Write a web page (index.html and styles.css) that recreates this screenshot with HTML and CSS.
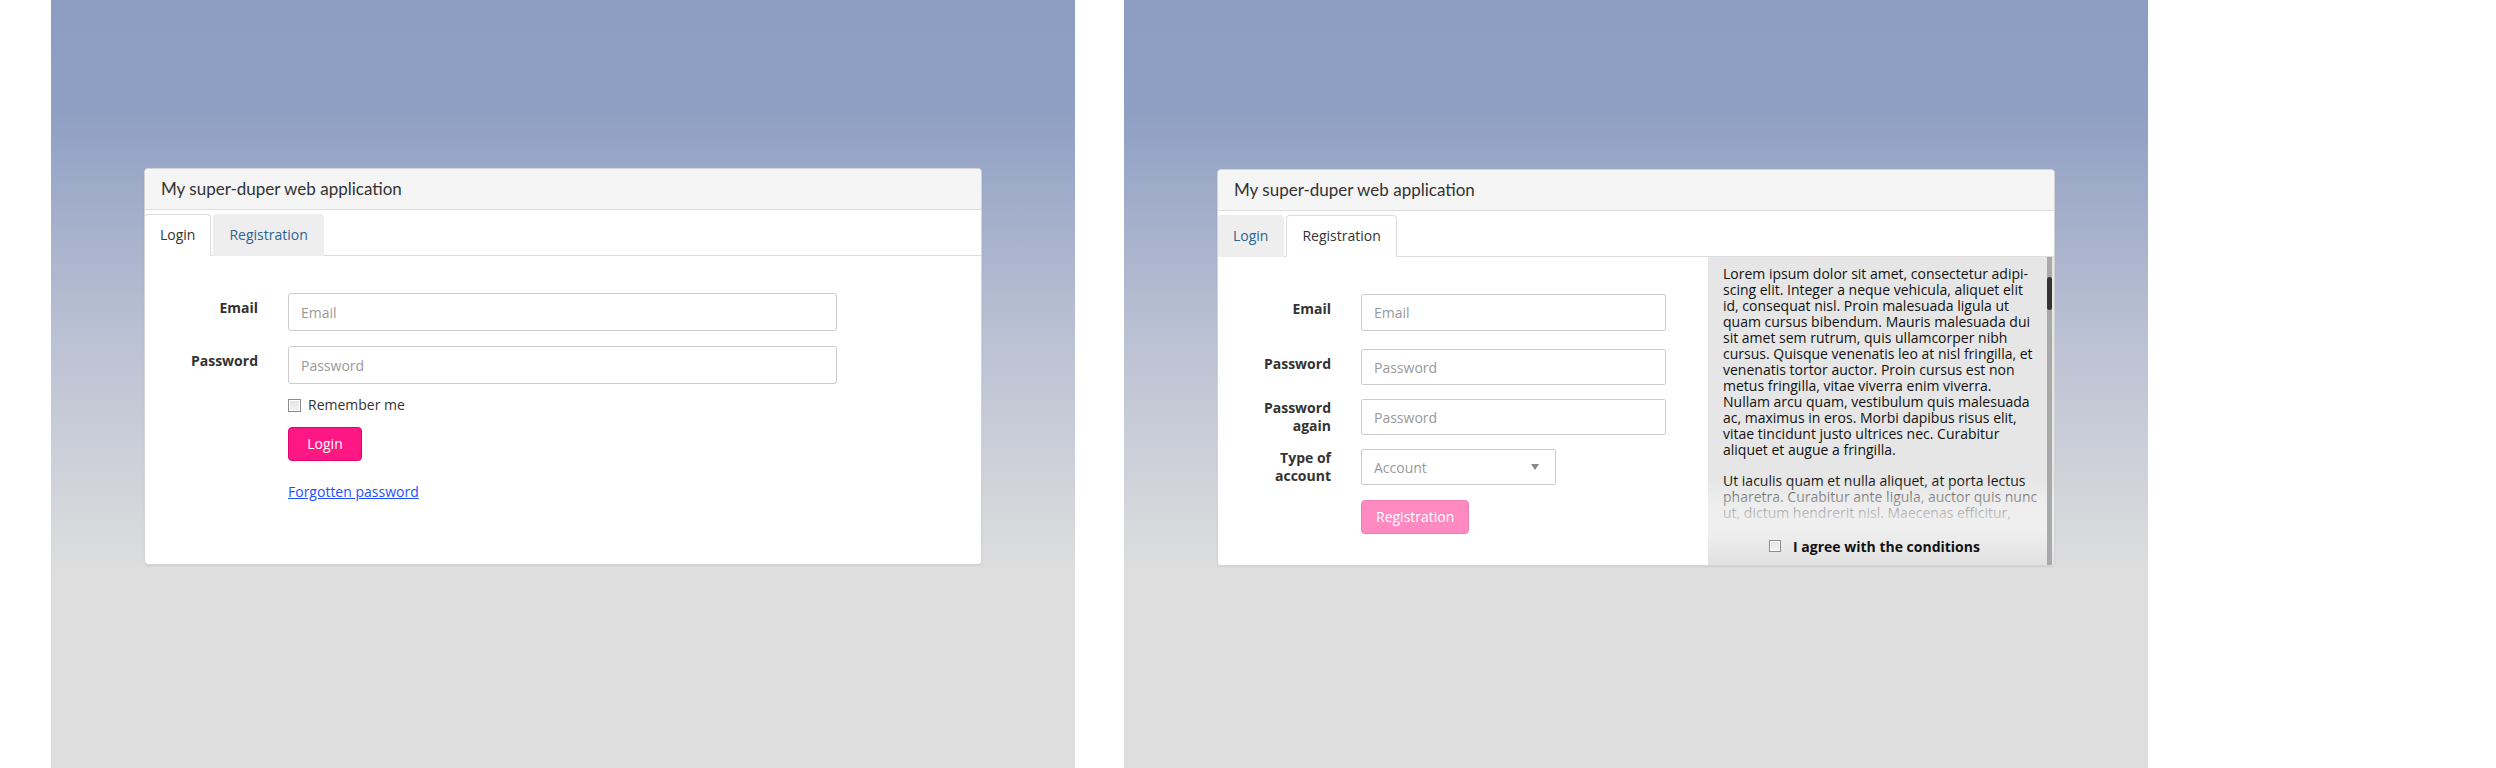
FILE: index.html
```html
<!DOCTYPE html>
<html lang="en">
<head>
<meta charset="utf-8">
<title>My super-duper web application</title>
<link rel="stylesheet" href="styles.css">
</head>
<body>
<div class="stage">
  <section class="screen">
    <div class="card">
      <div class="card-header">My super-duper web application</div>
      <ul class="tabs">
        <li class="tab is-active">Login</li>
        <li class="tab">Registration</li>
      </ul>
      <div class="tab-body">
        <form class="form form--login">
          <div class="row">
            <label class="label">Email</label>
            <input class="control control--wide" type="text" placeholder="Email">
          </div>
          <div class="row row--tight">
            <label class="label">Password</label>
            <input class="control control--wide" type="password" placeholder="Password">
          </div>
          <div class="row row--offset">
            <label class="check"><span class="checkbox"></span>Remember me</label>
          </div>
          <div class="row row--offset row--button">
            <button class="btn" type="button">Login</button>
          </div>
          <div class="row row--offset">
            <a class="link" href="#">Forgotten password</a>
          </div>
        </form>
      </div>
    </div>
  </section>

  <section class="screen screen--reg">
    <div class="card">
      <div class="card-header">My super-duper web application</div>
      <ul class="tabs">
        <li class="tab">Login</li>
        <li class="tab is-active">Registration</li>
      </ul>
      <div class="tab-body tab-body--split">
        <form class="form form--reg">
          <div class="row">
            <label class="label">Email</label>
            <input class="control control--mid" type="text" placeholder="Email">
          </div>
          <div class="row">
            <label class="label">Password</label>
            <input class="control control--mid" type="password" placeholder="Password">
          </div>
          <div class="row">
            <label class="label label--two">Password again</label>
            <input class="control control--mid" type="password" placeholder="Password">
          </div>
          <div class="row">
            <label class="label label--two">Type of account</label>
            <div class="control control--select">
              <span class="select-text">Account</span>
              <svg class="select-arrow" width="8" height="6" viewBox="0 0 8 6"><path d="M0 0H8L4 6Z" fill="#8a8a8a"/></svg>
            </div>
          </div>
          <div class="row row--offset">
            <button class="btn btn--disabled" type="button">Registration</button>
          </div>
        </form>
        <aside class="terms">
          <div class="terms-text">
            <p>Lorem ipsum dolor sit amet, consectetur adipi&shy;scing elit. Integer a neque vehicula, aliquet elit id, consequat nisl. Proin malesuada ligula ut quam cursus bibendum. Mauris malesuada dui sit amet sem rutrum, quis ullamcorper nibh cursus. Quisque venenatis leo at nisl fringilla, et venenatis tortor auctor. Proin cursus est non metus fringilla, vitae viverra enim viverra. Nullam arcu quam, vestibulum quis malesuada ac, maximus in eros. Morbi dapibus risus elit, vitae tincidunt justo ultrices nec. Curabitur aliquet et augue a fringilla.</p>
            <p>Ut iaculis quam et nulla aliquet, at porta lectus pharetra. Curabitur ante ligula, auctor quis nunc ut, dictum hendrerit nisl. Maecenas efficitur,</p>
          </div>
          <div class="terms-footer">
            <label class="agree"><span class="checkbox checkbox--small"></span>I agree with the conditions</label>
          </div>
          <div class="scrollbar"><div class="scrollbar-thumb"></div></div>
        </aside>
      </div>
    </div>
  </section>
</div>
</body>
</html>
```

FILE: styles.css
```css
html, body {
  margin: 0;
  padding: 0;
  background: #ffffff;
}

body {
  font-family: "Open Sans", "DejaVu Sans", sans-serif;
  color: #333333;
}

.stage {
  display: flex;
  gap: 49px;
  padding-left: 51px;
}

.screen {
  width: 1024px;
  height: 768px;
  flex: none;
  box-sizing: border-box;
  padding-top: 168px;
  background: linear-gradient(to bottom, #8e9ec3 0px, #8f9fc3 110px, #b9c0d3 330px, #dedede 575px, #dedede 768px);
}

.screen--reg {
  padding-top: 169px;
}

.card {
  width: 838px;
  margin: 0 auto;
  box-sizing: border-box;
  background: #ffffff;
  border: 1px solid #d4d4d4;
  border-radius: 4px;
  box-shadow: 0 1px 2px rgba(0, 0, 0, 0.06);
  overflow: hidden;
}

.card-header {
  background: #f5f5f5;
  border-bottom: 1px solid #dddddd;
  padding: 10px 16px;
  font-family: Lato, "Open Sans", sans-serif;
  font-size: 17px;
  line-height: 20px;
  color: #333333;
}

.tabs {
  list-style: none;
  margin: 4px 0 0 -1px;
  padding: 0;
  display: flex;
  border-bottom: 1px solid #dddddd;
}

.tab {
  padding: 10px 15px;
  margin: 0 2px -1px 0;
  font-size: 14px;
  line-height: 20px;
  color: #2a6496;
  background: #eeeeee;
  border: 1px solid #eeeeee;
  border-bottom-color: transparent;
  border-radius: 4px 4px 0 0;
}

.tab.is-active {
  color: #333333;
  background: #ffffff;
  border-color: #dddddd #dddddd transparent;
}

.tab-body {
  height: 308px;
  box-sizing: border-box;
}

.tab-body--split {
  display: flex;
}

.form {
  padding-top: 37px;
  box-sizing: border-box;
}

.form--reg {
  width: 490px;
  flex: none;
}

.row {
  display: flex;
  align-items: flex-start;
  margin-bottom: 15px;
}

.row--tight {
  margin-bottom: 14px;
}

.row--offset {
  padding-left: 143px;
}

.row--button {
  margin-bottom: 21px;
}

.label {
  width: 113px;
  flex: none;
  box-sizing: border-box;
  padding: 6px 0 0 15px;
  margin-right: 30px;
  text-align: right;
  font-weight: 700;
  font-size: 14px;
  line-height: 18px;
  color: #333333;
}

.label--two {
  padding-top: 0;
}

.control {
  box-sizing: border-box;
  height: 38px;
  padding: 0 12px;
  border: 1px solid #cccccc;
  border-radius: 3px;
  background: #ffffff;
  font-family: "Open Sans", sans-serif;
  font-size: 14px;
  color: #555555;
  outline: none;
}

.control::placeholder {
  color: #999999;
}

.control--wide {
  width: 549px;
}

.form--reg .row {
  margin-bottom: 14px;
}

.form--reg .row:first-child {
  margin-bottom: 18px;
}

.form--reg .row:nth-child(4) {
  margin-bottom: 15px;
}

.form--reg .control {
  height: 36px;
  border-radius: 2px;
}

.form--reg .row:first-child .control {
  height: 37px;
}

.control--mid {
  width: 305px;
}

.control--select {
  width: 195px;
  display: flex;
  align-items: center;
  justify-content: space-between;
  padding: 0 16px 0 12px;
}

.select-text {
  color: #999999;
}

.select-arrow {
  display: block;
}

.check {
  display: flex;
  align-items: center;
  gap: 7px;
  height: 14px;
  font-size: 14px;
  line-height: 14px;
  color: #333333;
}

.checkbox {
  width: 13px;
  height: 13px;
  box-sizing: border-box;
  border: 1px solid #8c8c8c;
  background: linear-gradient(to bottom, #e2e2e2, #f4f4f4);
  box-shadow: inset 0 0 0 1px #ffffff;
  flex: none;
}

.checkbox--small {
  width: 12px;
  height: 12px;
}

.btn {
  height: 34px;
  min-width: 74px;
  padding: 0 14px;
  box-sizing: border-box;
  border: 1px solid #e2006f;
  border-radius: 4px;
  background: #ff1784;
  color: #ffffff;
  font-family: "Open Sans", sans-serif;
  font-size: 14px;
  line-height: 20px;
  cursor: pointer;
}

.btn--disabled {
  opacity: 0.5;
}

.link {
  font-size: 14px;
  line-height: 20px;
  color: #1f4fff;
  text-decoration: underline;
}

.terms {
  flex: 1;
  position: relative;
  overflow: hidden;
  background: #e6e6e6;
  color: #111111;
}

.terms-text {
  box-sizing: border-box;
  padding: 9px 15px 0 15px;
  font-size: 14px;
  line-height: 16px;
}

.terms-text p {
  margin: 0 0 15px;
}

.terms-footer {
  position: absolute;
  left: 0;
  right: 0;
  bottom: 0;
  height: 84px;
  box-sizing: border-box;
  padding-top: 57px;
  display: flex;
  justify-content: center;
  background: linear-gradient(to bottom, rgba(242, 242, 242, 0) 0%, rgba(242, 242, 242, 0.5) 18%, rgba(242, 242, 242, 0.72) 37%, rgba(240, 240, 240, 0.96) 57%, #eaeaea 75%, #e1e1e1 100%);
}

.agree {
  display: flex;
  align-items: center;
  gap: 12px;
  height: 16px;
  font-size: 14px;
  font-weight: 700;
  color: #111111;
  padding-right: 13px;
}

.scrollbar {
  position: absolute;
  top: 0;
  bottom: 0;
  right: 2px;
  width: 5px;
  background: #a9a9a9;
}

.scrollbar-thumb {
  margin-top: 20px;
  height: 33px;
  border-radius: 3px;
  background: #333333;
}
```
